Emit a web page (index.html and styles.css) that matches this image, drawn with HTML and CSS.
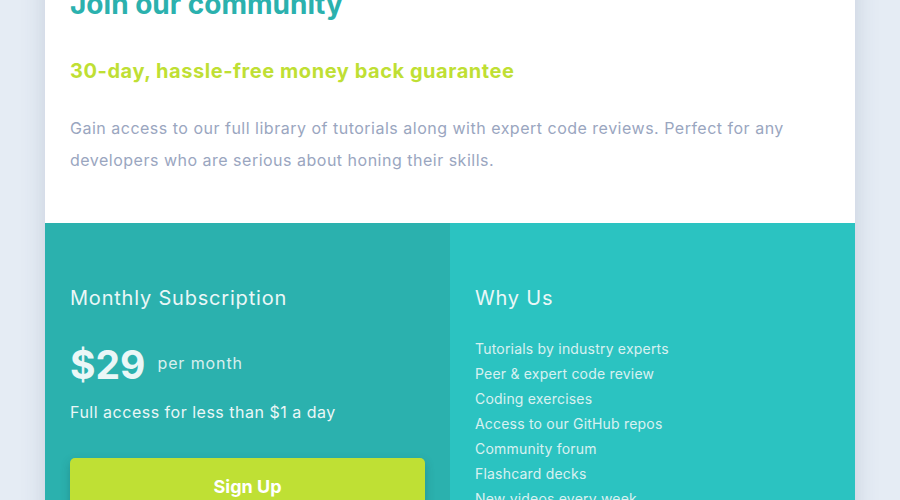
FILE: index.html
```html
<!DOCTYPE html>
<html lang="en">
<head>
  <meta charset="UTF-8" />
  <meta name="viewport" content="width=device-width, initial-scale=1" />
  <title>Single Price Grid</title>
  <link rel="stylesheet" href="styles.css">
</head>
<body>

  <main class="card">
    <section class="intro">
      <h1>Join our community</h1>
      <h2>30-day, hassle-free money back guarantee</h2>
      <p>Gain access to our full library of tutorials along with expert code reviews. Perfect for any developers who are serious about honing their skills.</p>
    </section>

    <div class="bottom">
      <section class="subscription">
        <h3>Monthly Subscription</h3>
        <div class="price">
          <span class="amount">$29</span>
          <span class="period">per month</span>
        </div>
        <p class="note">Full access for less than $1 a day</p>
        <button class="signup">Sign Up</button>
      </section>

      <section class="why">
        <h3>Why Us</h3>
        <ul>
          <li>Tutorials by industry experts</li>
          <li>Peer &amp; expert code review</li>
          <li>Coding exercises</li>
          <li>Access to our GitHub repos</li>
          <li>Community forum</li>
          <li>Flashcard decks</li>
          <li>New videos every week</li>
        </ul>
      </section>
    </div>
  </main>

</body>
</html>
```

FILE: styles.css
```css
body {
  margin: 0;
  height: 100vh;
  display: flex;
  align-items: center;
  justify-content: center;
  background: #e5ecf4;
  font-family: "Inter", "Lato", sans-serif;
  overflow: hidden;
}

.card {
  width: 810px;
  flex-shrink: 0;
  background: white;
  border-radius: 6px;
  overflow: hidden;
  box-shadow: 0 8px 24px rgba(60, 80, 120, 0.18);
}

.intro {
  padding: 40px 25px 47px;
}

.intro h1 {
  margin: 0;
  font-size: 28px;
  line-height: 40px;
  font-weight: 700;
  color: #2bb1ae;
}

.intro h2 {
  margin: 33px 0 0;
  font-size: 20px;
  line-height: 28px;
  font-weight: 700;
  letter-spacing: 0.55px;
  color: #bfdf34;
}

.intro p {
  margin: 27px 0 0;
  font-size: 16px;
  line-height: 32px;
  letter-spacing: 0.5px;
  color: #9aa6bf;
}

.bottom {
  display: grid;
  grid-template-columns: 1fr 1fr;
  color: #eaf7f7;
}

.subscription,
.why {
  padding: 61px 25px 41px;
}

.subscription {
  background: #2bb1ae;
}

.why {
  background: #2bc3c1;
}

h3 {
  margin: 0;
  font-size: 20px;
  line-height: 28px;
  font-weight: 400;
  letter-spacing: 0.8px;
}

.price {
  display: flex;
  align-items: center;
  gap: 12px;
  margin-top: 28px;
}

.amount {
  font-size: 39px;
  line-height: 50px;
  font-weight: 700;
}

.period {
  font-size: 16px;
  margin-top: -4px;
  letter-spacing: 0.9px;
  opacity: 0.9;
}

.note {
  margin: 10px 0 0;
  font-size: 16px;
  line-height: 24px;
  letter-spacing: 0.5px;
}

.signup {
  display: block;
  width: 100%;
  margin-top: 34px;
  height: 58px;
  border: none;
  border-radius: 5px;
  background: #bfe034;
  color: white;
  font-family: inherit;
  font-size: 18px;
  font-weight: 700;
  box-shadow: 0 4px 10px rgba(20, 60, 60, 0.25);
  cursor: pointer;
}

.why ul {
  list-style: none;
  margin: 24px 0 0;
  padding: 0;
  font-size: 14px;
  line-height: 25px;
  letter-spacing: 0.2px;
  opacity: 0.9;
}
```
